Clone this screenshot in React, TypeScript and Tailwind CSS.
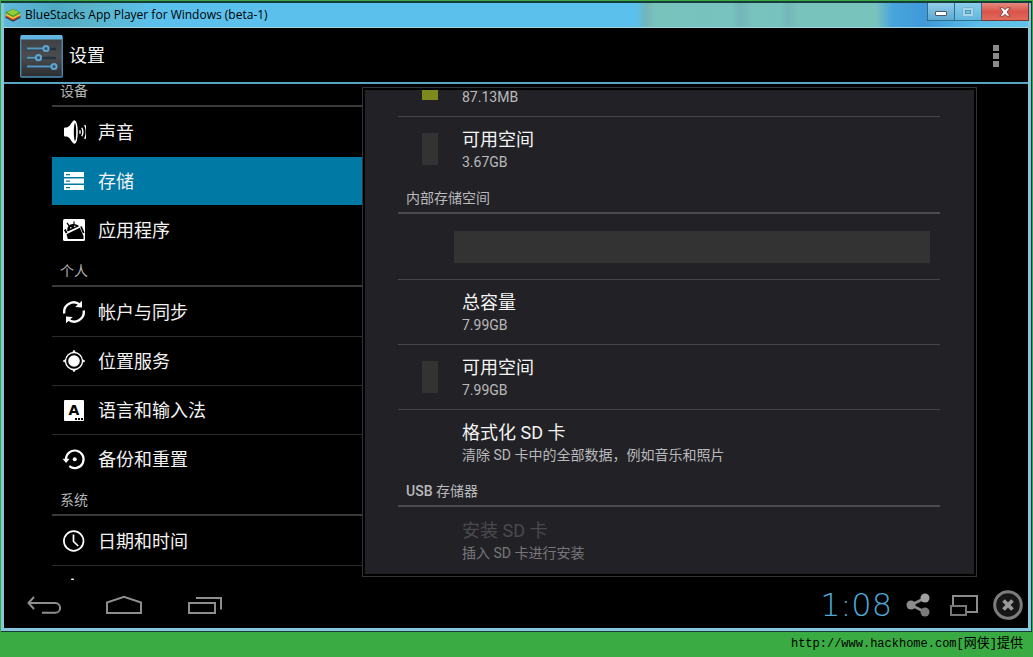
import type { ReactNode } from "react";

const CJK = "font-['Roboto','Noto_Sans_CJK_SC',sans-serif]";

function SoundIcon() {
  return (
    <svg viewBox="0 0 24 24" className="size-6" aria-hidden="true">
      <path d="M2 8.500q0-1 1-1h3v9H3q-1 0-1-1z" fill="#fff" />
      <path d="M5 7.500C8 6.500 9 3 11.500 .6h1.500v22.800h-1.500C9 21 8 17.500 5 16.500z" fill="#fff" />
      <ellipse cx="12.800" cy="12" rx="3" ry="11.500" fill="#fff" />
      <ellipse cx="13" cy="12" rx="1.200" ry="9" fill="#000" />
      <path d="M18 10.300v3.400" stroke="#fff" strokeWidth="1.400" />
      <path d="M19.800 7.800q2.200 4.200 0 8.400M22.800 5q3 7 0 14" fill="none" stroke="#fff" strokeWidth="1.400" />
    </svg>
  );
}

function StorageIcon() {
  return (
    <svg viewBox="0 0 24 24" className="size-6" aria-hidden="true">
      <path d="M2 3h20v5H2zM2 9.500h20v5H2zM2 16h20v5H2z" fill="#fff" />
      <path d="M4 5h4v1.200H4zM4 11.500h4v1.200H4zM4 18h4v1.200H4z" fill="#0079a5" />
    </svg>
  );
}

function AppsIcon() {
  return (
    <svg viewBox="0 0 24 24" className="size-6" aria-hidden="true">
      <rect x="1" y="1" width="22" height="22" rx="1.500" fill="#fff" />
      <path d="M5.200 12.200C5.200 8.500 7.500 6.300 10.800 6c2.900-.2 5 .8 6.200 2.200L5.700 13.600z" fill="#000" />
      <path d="M7.300 7.800 5 5M12 6.500V3.500" stroke="#000" strokeWidth="1.200" />
      <path d="M4.500 16.300 17.800 9.700l3.700 8.300v3H5.800z" fill="#000" />
      <path d="M2.800 11.500 4.600 15M19 8.500l2.700 6.500" stroke="#000" strokeWidth="1.800" />
      <circle cx="8.800" cy="9.800" r=".8" fill="#fff" />
      <circle cx="12.800" cy="8.300" r=".8" fill="#fff" />
    </svg>
  );
}

function SyncIcon() {
  return (
    <svg viewBox="0 0 24 24" className="size-6" aria-hidden="true">
      <path d="M2.300 13.500A9.600 9.600 0 0 1 17.800 4.600M21.700 10.500A9.600 9.600 0 0 1 6.200 19.400" fill="none" stroke="#fff" strokeWidth="2.400" />
      <path d="M20 .8v6.800l-6.800-.6zM4 23.200v-6.800l6.800 .6z" fill="#fff" />
    </svg>
  );
}

function LocationIcon() {
  return (
    <svg viewBox="0 0 24 24" className="size-6" aria-hidden="true">
      <circle cx="12" cy="12" r="8.500" fill="none" stroke="#fff" strokeWidth="1.300" />
      <circle cx="12" cy="12" r="5.800" fill="#fff" />
      <path d="M10.500 3.500 12 1l1.500 2.500zM10.500 20.500l1.500 2.500 1.500-2.500zM3.500 10.500 1 12l2.500 1.500zM20.500 10.500 23 12l-2.500 1.500z" fill="#fff" stroke="#fff" strokeWidth=".6" />
    </svg>
  );
}

function LanguageIcon() {
  return (
    <span className="flex size-6 items-center justify-center">
      <span className="relative flex h-[21px] w-5 items-center justify-center rounded-[1px] bg-white font-['DejaVu_Sans',sans-serif] text-sm font-bold text-black">
        A
        <svg viewBox="0 0 8 2" className="absolute right-px bottom-px h-[2px] w-2" aria-hidden="true">
          <path d="M0 0h2v2H0zM3 0h2v2H3zM6 0h2v2H6z" fill="#000" />
        </svg>
      </span>
    </span>
  );
}

function BackupIcon() {
  return (
    <svg viewBox="0 0 24 24" className="size-6" aria-hidden="true">
      <path d="M4 12.300A8.800 8.800 0 1 1 7.300 19.200" fill="none" stroke="#fff" strokeWidth="2.200" />
      <path d="M.6 11.800h7l-3.500 4.200z" fill="#fff" />
      <circle cx="12.700" cy="12.200" r="2" fill="#fff" />
    </svg>
  );
}

function ClockIcon() {
  return (
    <svg viewBox="0 0 24 24" className="size-6" aria-hidden="true">
      <circle cx="11.700" cy="12" r="9.800" fill="none" stroke="#fff" strokeWidth="1.700" />
      <path d="M11.500 5.500v7l4.700 4.500" fill="none" stroke="#fff" strokeWidth="1.700" />
    </svg>
  );
}

function HandIcon() {
  return (
    <svg viewBox="0 0 24 24" className="size-6" aria-hidden="true">
      <path d="M9.500 .5h2L12 2v10H9V2z" fill="#fff" />
    </svg>
  );
}

function SettingsLogo() {
  return (
    <svg viewBox="0 0 43 43" className="size-[43px]" aria-hidden="true">
      <defs>
        <linearGradient id="tile" x1="0" y1="0" x2="0" y2="1">
          <stop offset="0" stopColor="#3d4044" />
          <stop offset=".5" stopColor="#4b4c4e" />
          <stop offset="1" stopColor="#2c2d30" />
        </linearGradient>
      </defs>
      <rect x=".7" y="1" width="41.600" height="41" rx="1" fill="url(#tile)" stroke="#4a8fb8" strokeWidth="1.300" />
      <path d="M1 0h41v4.500H1z" fill="#62b5e2" />
      <path d="M7 14h29M7 23h29M7 32h29" stroke="#263440" strokeWidth="2.400" />
      <path d="M7 13.500h18M7 22.700h11M7 31.500h26" stroke="#5695bd" strokeWidth="2" />
      <g fill="#31536a" stroke="#5fa5d0" strokeWidth="2">
        <circle cx="26" cy="13.500" r="2.600" />
        <circle cx="18.500" cy="22.700" r="2.600" />
        <circle cx="34" cy="31.500" r="2.600" />
      </g>
    </svg>
  );
}

function BlueStacksLogo() {
  return (
    <svg viewBox="0 0 16 14" className="h-[14px] w-4" aria-hidden="true">
      <path d="M.5 8.500 8 5l7.500 3.500v1.200L8 13.800 .5 9.700z" fill="#263d48" />
      <path d="M.7 7.300 8 4l7.300 3.300v1.200L8 12.400 .7 8.500z" fill="#d9482d" />
      <path d="M.7 6 8 3l7.300 3v1.300L8 11 .7 7.300z" fill="#f2c531" />
      <path d="M.5 4.300 8 .8l7.500 3.500v1L8 9.300 .5 5.300z" fill="#4b9c32" />
      <path d="M2 4.300 8 1.400l6 2.900L8 7.400z" fill="#93ce3b" />
    </svg>
  );
}

type Entry = { label: string; icon: ReactNode; selected?: boolean; divider?: boolean };

const sections: { title: string; items: Entry[] }[] = [
  {
    title: "设备",
    items: [
      { label: "声音", icon: <SoundIcon /> },
      { label: "存储", icon: <StorageIcon />, selected: true },
      { label: "应用程序", icon: <AppsIcon /> },
    ],
  },
  {
    title: "个人",
    items: [
      { label: "帐户与同步", icon: <SyncIcon /> },
      { label: "位置服务", icon: <LocationIcon />, divider: true },
      { label: "语言和输入法", icon: <LanguageIcon />, divider: true },
      { label: "备份和重置", icon: <BackupIcon />, divider: true },
    ],
  },
  {
    title: "系统",
    items: [
      { label: "日期和时间", icon: <ClockIcon /> },
      { label: "", icon: <HandIcon />, divider: true },
    ],
  },
];

function Sidebar() {
  return (
    <nav className="w-[310px] shrink-0 overflow-hidden">
      <div className="-mt-[10px]">
        {sections.map((section) => (
          <section key={section.title}>
            <h2 className="flex h-[33px] items-center border-b-2 border-[#3a3a3a] pt-[3px] pl-2 text-sm text-[#b4b4b4]">
              {section.title}
            </h2>
            <ul>
              {section.items.map((item, i) => (
                <li key={i} className={item.divider ? "border-t border-[#2c2c2c]" : "border-t border-black"}>
                  <a
                    href="#"
                    aria-current={item.selected ? "page" : undefined}
                    className={`flex h-12 items-center gap-3 pl-[10px] text-lg text-[#f2f2f2] ${item.selected ? "bg-[#0079a5]" : ""}`}
                  >
                    {item.icon}
                    {item.label && <span className="pt-px">{item.label}</span>}
                  </a>
                </li>
              ))}
            </ul>
          </section>
        ))}
      </div>
    </nav>
  );
}

function Row({
  title,
  detail,
  swatch,
  divider = true,
  disabled = false,
}: {
  title?: string;
  detail: ReactNode;
  swatch?: string;
  divider?: boolean;
  disabled?: boolean;
}) {
  return (
    <div className={`flex h-[65px] items-center border-t pl-6 ${divider ? "border-[#46464a]" : "border-transparent"}`}>
      <div className={`h-8 w-4 ${swatch ?? ""}`} />
      <div className="pt-[2px] pl-6">
        <p className={`h-6 text-lg leading-6 ${disabled ? "text-[#4a4a4d]" : "text-[#f4f4f4]"}`}>{title}</p>
        <p className={`text-sm leading-5 ${disabled ? "text-[#77777a]" : "text-[#b9b9bb]"}`}>{detail}</p>
      </div>
    </div>
  );
}

function PanelHeading({ children }: { children: ReactNode }) {
  return (
    <h2 className="flex h-[33px] items-center border-b-2 border-[#4c4c50] pt-[3px] pl-2 text-sm text-[#b9b9bb]">
      {children}
    </h2>
  );
}

function StoragePanel() {
  return (
    <main className="my-[3px] mr-[51px] flex min-w-0 flex-1 border border-[#343436] bg-black p-[2px]">
      <div className="flex-1 overflow-hidden bg-[#222226] pr-[34px] pl-[33px]">
        <div className="-mt-[39px]">
          <Row detail="87.13MB" swatch="bg-[#7e8a1e]" divider={false} />
          <Row title="可用空间" detail="3.67GB" swatch="bg-[#333333]" />
          <PanelHeading>内部存储空间</PanelHeading>
          <div className="flex h-[65px] items-center pr-[10px] pl-14">
            <div className="h-8 flex-1 bg-[#333333]" />
          </div>
          <Row title="总容量" detail="7.99GB" />
          <Row title="可用空间" detail="7.99GB" swatch="bg-[#333333]" />
          <Row title="格式化 SD 卡" detail="清除 SD 卡中的全部数据，例如音乐和照片" />
          <PanelHeading>
            <span className="font-medium">USB</span>&nbsp;存储器
          </PanelHeading>
          <Row title="安装 SD 卡" detail="插入 SD 卡进行安装" divider={false} disabled />
        </div>
      </div>
    </main>
  );
}

function TitleBar() {
  return (
    <header className="flex h-[25px] shrink-0 items-start justify-between border-b border-[#a5d3df] bg-[linear-gradient(90deg,#61b8dc_0px,#4fabc4_50px,#5ab5cc_90px,#5bc1ec_150px,#5bc1ec_632px,#73b5b8_642px,#79c3bd_652px,#78c2bf_728px,#74b5b9_736px,#79c3bd_750px,#78c2bf_776px,#76b7b9_784px,#79c3bd_796px,#79c3bd_872px,#48a6dc_888px,#4098d8_920px,#5bbde8_975px,#62c0ea_100%)] pl-[1px]">
      <div className="flex h-6 items-center gap-[4px]">
        <BlueStacksLogo />
        <h1 className="font-['Open_Sans',sans-serif] text-xs text-black">BlueStacks App Player for Windows (beta-1)</h1>
      </div>
      <div className="-mr-px flex h-[18px]">
        <button aria-label="最小化" className="flex w-7 items-center justify-center border border-t-0 border-[#2f6f8e] bg-linear-to-b from-[#93cdea] to-[#5ea9d0]">
          <svg viewBox="0 0 12 5" className="mt-1 h-[5px] w-3" aria-hidden="true">
            <rect x=".5" y=".5" width="11" height="4" rx=".5" fill="#fff" stroke="#4a5a66" />
          </svg>
        </button>
        <button aria-label="最大化" className="flex w-[27px] items-center justify-center border-r border-b border-[#2f6f8e] bg-linear-to-b from-[#8bcdec] to-[#5fb7e0]">
          <svg viewBox="0 0 12 10" className="h-[10px] w-3" aria-hidden="true">
            <rect x=".5" y=".5" width="11" height="9" rx="1" fill="#a3d6ec" stroke="#78b4d0" />
            <rect x="3.500" y="3.500" width="5" height="3" fill="#73bbdd" stroke="#5c98b4" />
          </svg>
        </button>
        <button aria-label="关闭" className="flex w-[47px] items-center justify-center border-r border-b border-[#7a3430] bg-linear-to-b from-[#e58a80] via-[#d9544a] to-[#e2695a]">
          <svg viewBox="0 0 12 10" className="h-[10px] w-3" aria-hidden="true">
            <path d="M.8 .8h3.400L6 2.700 7.800 .8h3.400L8 5l3.200 4.200H7.800L6 7.300 4.200 9.200H.8L4 5z" fill="#fff" stroke="#7b3b3b" strokeWidth=".9" />
          </svg>
        </button>
      </div>
    </header>
  );
}

function NavigationBar() {
  return (
    <footer className="flex h-12 shrink-0 items-center justify-between pt-px pr-[5px] pl-[22px]">
      <div className="flex items-center gap-[43px]">
        <button aria-label="返回">
          <svg viewBox="0 0 36 20" className="h-5 w-9" fill="none" stroke="#8e8e8e" strokeWidth="2" aria-hidden="true">
            <path d="M8 2 2.500 8 8 14M2.500 8h26.700a4.900 4.900 0 0 1 0 9.800H16" />
          </svg>
        </button>
        <button aria-label="主屏幕">
          <svg viewBox="0 0 38 20" className="h-5 w-[38px]" fill="none" stroke="#8e8e8e" strokeWidth="2" aria-hidden="true">
            <path d="M2 18V7.500L19 1.800l17 5.700V18z" />
          </svg>
        </button>
        <button aria-label="最近使用">
          <svg viewBox="0 0 38 20" className="h-5 w-[38px]" fill="none" stroke="#8e8e8e" strokeWidth="2" aria-hidden="true">
            <path d="M3 8h26v10H3zM10 3h25v11.500" />
          </svg>
        </button>
      </div>
      <div className="flex items-center">
        <time className="mr-[14px] font-['DejaVu_Sans',sans-serif] text-[32px] leading-10 font-extralight text-[#4fa9d6]">1:08</time>
        <button aria-label="分享" className="mr-5">
          <svg viewBox="0 0 24 24" className="size-6" aria-hidden="true">
            <path d="M19 5 5 12l14 7" fill="none" stroke="#8c8c8c" strokeWidth="2.600" />
            <circle cx="19" cy="5" r="4.500" fill="#a0a0a0" />
            <circle cx="5" cy="12" r="4.500" fill="#8c8c8c" />
            <circle cx="19" cy="19" r="4.500" fill="#7b7b7b" />
          </svg>
        </button>
        <button aria-label="窗口大小" className="mr-[14px]">
          <svg viewBox="0 0 29 24" className="h-6 w-[29px]" fill="#000" stroke="#8c8c8c" strokeWidth="2" aria-hidden="true">
            <path d="M3 3h24v16H3z" />
            <path d="M1 13h15v9H1z" stroke="#777" />
          </svg>
        </button>
        <button aria-label="关闭应用">
          <svg viewBox="0 0 30 30" className="size-[30px]" aria-hidden="true">
            <circle cx="15" cy="15" r="13.300" fill="#161616" stroke="#7c7c7c" strokeWidth="3" />
            <path d="m10.500 10.500 9 9m0-9-9 9" stroke="#999" strokeWidth="3.800" />
          </svg>
        </button>
      </div>
    </footer>
  );
}

export default function App() {
  return (
    <div className={`flex h-screen flex-col bg-[#3aaa42] px-px pt-px ${CJK}`}>
      <div className="flex min-h-0 flex-1 flex-col border-t-2 border-r border-b border-[#163d3c] bg-[#86c6dd] px-[3px] pb-[3px]">
        <TitleBar />
        <div className="flex min-h-0 flex-1 flex-col bg-black">
          <div className="flex h-14 shrink-0 items-center justify-between border-b-2 border-[#5ba3c2] pt-[2px] pr-[29px] pl-4">
            <div className="flex items-center gap-[6px]">
              <SettingsLogo />
              <span className="text-lg text-[#f4f4f4]">设置</span>
            </div>
            <button aria-label="更多选项" className="flex flex-col gap-[2px]">
              <span className="size-[6px] bg-[#8a8a8a]" />
              <span className="size-[6px] bg-[#8a8a8a]" />
              <span className="size-[6px] bg-[#8a8a8a]" />
            </button>
          </div>
          <div className="flex min-h-0 flex-1 pl-12">
            <Sidebar />
            <StoragePanel />
          </div>
          <NavigationBar />
        </div>
      </div>
      <p className="flex h-[25px] shrink-0 items-center justify-end pr-[9px] pb-[2px] font-['Liberation_Mono','Noto_Sans_CJK_SC',monospace] text-xs text-black">
        http://www.hackhome.com[<span className="text-[13px]">网侠</span>]<span className="text-[13px]">提供</span>
      </p>
    </div>
  );
}
